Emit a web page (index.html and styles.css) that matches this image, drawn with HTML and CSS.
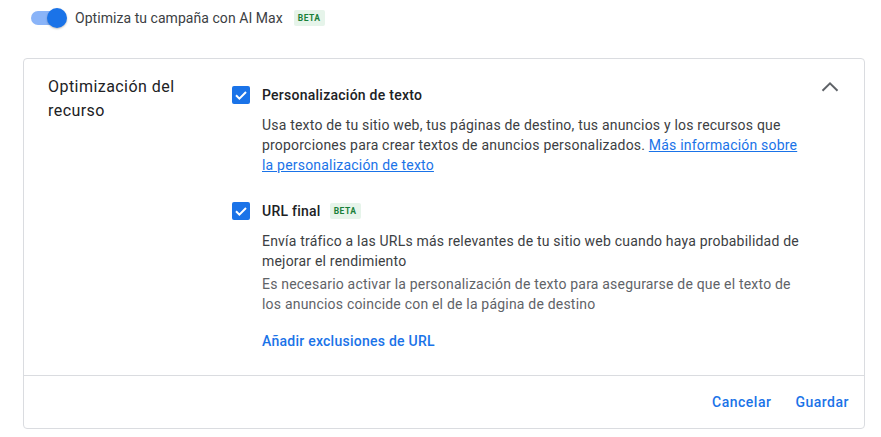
FILE: index.html
```html
<!DOCTYPE html>
<html lang="es">
<head>
<meta charset="utf-8">
<title>Optimización del recurso</title>
<link rel="stylesheet" href="styles.css">
</head>
<body>
<div class="page">
  <div class="toggle-row">
    <span class="switch"><span class="track"></span><span class="thumb"></span></span>
    <span class="toggle-label">Optimiza tu campaña con AI Max</span>
    <span class="beta">BETA</span>
  </div>

  <section class="card">
    <div class="card-body">
      <h2 class="card-title">Optimización del recurso</h2>
      <div class="options">
        <div class="option">
          <div class="option-head">
            <span class="checkbox"><svg viewBox="0 0 18 18" width="18" height="18"><polyline points="4,9.2 7.4,12.6 14,6" fill="none" stroke="#fff" stroke-width="2"/></svg></span>
            <span class="option-label">Personalización de texto</span>
          </div>
          <p class="desc">Usa texto de tu sitio web, tus páginas de destino, tus anuncios y los recursos que proporciones para crear textos de anuncios personalizados. <a href="#" class="link">Más información sobre la personalización de texto</a></p>
        </div>
        <div class="option option-second">
          <div class="option-head">
            <span class="checkbox"><svg viewBox="0 0 18 18" width="18" height="18"><polyline points="4,9.2 7.4,12.6 14,6" fill="none" stroke="#fff" stroke-width="2"/></svg></span>
            <span class="option-label">URL final</span>
            <span class="beta beta-small">BETA</span>
          </div>
          <p class="desc">Envía tráfico a las URLs más relevantes de tu sitio web cuando haya probabilidad de mejorar el rendimiento</p>
          <p class="desc desc-muted">Es necesario activar la personalización de texto para asegurarse de que el texto de los anuncios coincide con el de la página de destino</p>
          <a href="#" class="action-link">Añadir exclusiones de URL</a>
        </div>
      </div>
      <button class="collapse" aria-label="Contraer">
        <svg viewBox="0 0 24 24" width="24" height="24"><polyline points="4.5,15.8 12,8.3 19.5,15.8" fill="none" stroke="#5f6368" stroke-width="2"/></svg>
      </button>
    </div>
    <div class="card-footer">
      <button class="text-btn">Cancelar</button>
      <button class="text-btn">Guardar</button>
    </div>
  </section>
</div>
</body>
</html>
```

FILE: styles.css
```css
* { box-sizing: border-box; }
html, body { margin: 0; padding: 0; background: #fff; }
body {
  font-family: Roboto, "Noto Sans", "Liberation Sans", sans-serif;
  font-size: 14px;
  color: #3c4043;
}
.page {
  padding: 0 16px 0 23px;
  width: 881px;
}
.toggle-row {
  height: 36px;
  display: flex;
  align-items: center;
  padding-left: 8px;
}
.switch {
  position: relative;
  width: 36px;
  height: 20px;
  margin-right: 8px;
  flex: none;
}
.track {
  position: absolute;
  left: 0;
  top: 3px;
  width: 33px;
  height: 14px;
  border-radius: 7px;
  background: #8ab4f8;
}
.thumb {
  position: absolute;
  right: 0;
  top: 0;
  width: 20px;
  height: 20px;
  border-radius: 50%;
  background: #1a73e8;
  box-shadow: 0 1px 2px rgba(0,0,0,0.25);
}
.toggle-label {
  font-size: 14px;
  color: #3c4043;
  line-height: 20px;
  letter-spacing: 0.05px;
}
.beta {
  display: inline-flex;
  align-items: center;
  justify-content: center;
  margin-left: 11px;
  height: 16px;
  padding: 0 4px;
  border-radius: 2px;
  background: #e6f4ea;
  color: #188038;
  font-size: 8.5px;
  font-weight: 700;
  letter-spacing: 0.5px;
}
.beta-small { margin-left: 9px; }

.card {
  margin-top: 22px;
  width: 842px;
  border: 1px solid #dadce0;
  border-radius: 4px;
}
.card-body {
  display: flex;
  align-items: flex-start;
  padding: 16px 22px 24px 24px;
}
.card-title {
  margin: 0;
  width: 184px;
  flex: none;
  font-size: 16px;
  font-weight: 400;
  line-height: 24px;
  letter-spacing: 0.45px;
  color: #202124;
  padding-right: 40px;
}
.options {
  flex: 1;
  letter-spacing: 0.25px;
}
.option-head {
  height: 40px;
  display: flex;
  align-items: center;
}
.checkbox {
  width: 18px;
  height: 18px;
  border-radius: 2px;
  background: #1a73e8;
  margin-right: 12px;
  flex: none;
  display: flex;
}
.option-label {
  font-size: 14px;
  font-weight: 500;
  color: #202124;
  line-height: 20px;
}
.desc {
  margin: 0 0 0 30px;
  max-width: 543px;
  line-height: 20px;
  letter-spacing: 0.2px;
  color: #3c4043;
}
.desc-muted {
  margin-top: 3px;
  color: #5f6368;
}
.link {
  color: #1a73e8;
  text-decoration: underline;
}
.option-second {
  margin-top: 16px;
}
.action-link {
  display: block;
  margin: 17px 0 0 30px;
  line-height: 20px;
  color: #1a73e8;
  font-weight: 500;
  text-decoration: none;
}
.collapse {
  flex: none;
  width: 24px;
  height: 24px;
  padding: 0;
  margin-top: 0;
  border: 0;
  background: none;
  display: flex;
}
.card-footer {
  border-top: 1px solid #dadce0;
  display: flex;
  justify-content: flex-end;
  gap: 8px;
  padding: 8px 7px 8px 8px;
}
.text-btn {
  height: 36px;
  padding: 0 8px;
  border: 0;
  background: none;
  font-family: inherit;
  font-size: 14px;
  font-weight: 500;
  letter-spacing: 0.5px;
  color: #1a73e8;
  cursor: pointer;
}
```
